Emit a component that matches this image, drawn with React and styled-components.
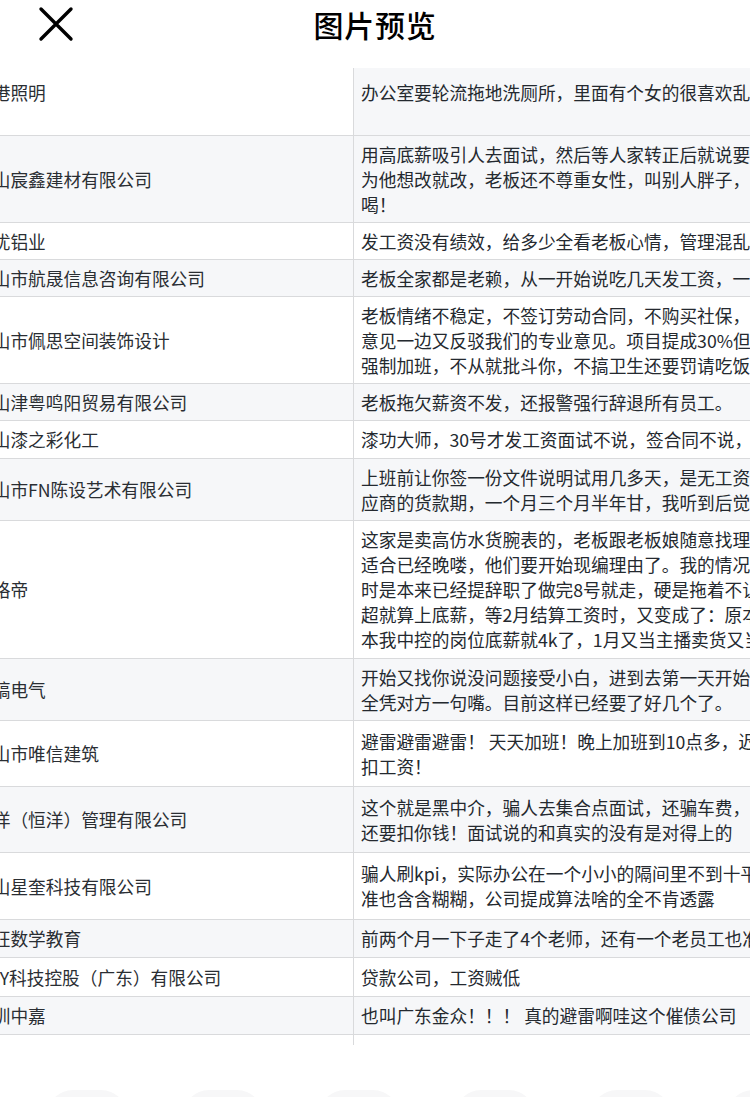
import React from "react";
import styled, { createGlobalStyle } from "styled-components";

const GlobalStyle = createGlobalStyle`
  html, body {
    margin: 0;
    padding: 0;
    background: #ffffff;
    overflow: hidden;
  }
  body {
    font-family: "Noto Sans CJK SC", "Noto Sans", "Liberation Sans", sans-serif;
    color: #24292f;
  }
  * { box-sizing: border-box; }
`;

const Page = styled.div`
  width: 750px;
  height: 1097px;
  display: flex;
  flex-direction: column;
  overflow: hidden;
  background: #ffffff;
`;

const Header = styled.header`
  flex-shrink: 0;
  height: 68px;
  display: grid;
  grid-template-columns: 1fr auto 1fr;
  align-items: start;
  padding-top: 6px;
  background: #ffffff;
`;

const CloseButton = styled.button`
  justify-self: start;
  margin-left: 38px;
  width: 36px;
  height: 36px;
  padding: 0;
  border: none;
  background: transparent;
  display: flex;
  align-items: center;
  justify-content: center;
  cursor: pointer;
`;

const Title = styled.h1`
  margin: 0;
  height: 36px;
  line-height: 36px;
  font-size: 30px;
  font-weight: 500;
  color: #000000;
  letter-spacing: 0.8px;
`;

const Frame = styled.div`
  flex-shrink: 0;
  height: 977px;
  overflow: hidden;
`;

const Table = styled.div`
  width: 1150px;
  margin-left: -33px;
  display: flex;
  flex-direction: column;
`;

const Row = styled.div`
  display: grid;
  grid-template-columns: 387px 1fr;
  height: ${(p) => p.$h}px;
  border-bottom: 1px solid #d9dadc;
`;

const NameCell = styled.div`
  display: flex;
  align-items: ${(p) => (p.$top ? "flex-start" : "center")};
  padding: ${(p) => (p.$top ? "12px 8px 0" : "0 8px")};
  border-right: 1px solid #d9dadc;
  background: ${(p) => (p.$shade ? "#f6f7f9" : "#ffffff")};
  font-size: 17.7px;
  line-height: 25px;
  white-space: nowrap;
  overflow: hidden;
  color: #2a2e33;
`;

const TextCell = styled.div`
  display: flex;
  flex-direction: column;
  justify-content: ${(p) => (p.$top ? "flex-start" : "center")};
  padding: ${(p) => (p.$top ? "12px 0 0 7px" : "0 0 0 7px")};
  background: ${(p) => (p.$shade ? "#f6f7f9" : "#ffffff")};
  overflow: hidden;
`;

const Line = styled.div`
  font-size: 17.7px;
  line-height: 25px;
  white-space: nowrap;
  color: #24292f;
`;

const Toolbar = styled.div`
  flex-shrink: 0;
  margin-top: 45px;
  display: flex;
  gap: 56px;
  padding-left: 47px;
`;

const ToolSlot = styled.div`
  flex-shrink: 0;
  width: 80px;
  height: 80px;
  border-radius: 26px;
  background: #f7f7f8;
`;

const rows = [
  {
    name: "华港照明",
    h: 68,
    top: true,
    nameShade: false,
    textShade: true,
    lines: ["办公室要轮流拖地洗厕所，里面有个女的很喜欢乱发脾气，动不动就骂人"],
  },
  {
    name: "佛山宸鑫建材有限公司",
    h: 87,
    shade: true,
    lines: [
      "用高底薪吸引人去面试，然后等人家转正后就说要改工资，说是公司规定",
      "为他想改就改，老板还不尊重女性，叫别人胖子，还经常骂人，真的劝退",
      "喝！",
    ],
  },
  {
    name: "兴优铝业",
    h: 37,
    lines: ["发工资没有绩效，给多少全看老板心情，管理混乱，天天开会骂人"],
  },
  {
    name: "佛山市航晟信息咨询有限公司",
    h: 37,
    shade: true,
    lines: ["老板全家都是老赖，从一开始说吃几天发工资，一直拖到现在都不发"],
  },
  {
    name: "佛山市佩思空间装饰设计",
    h: 87,
    lines: [
      "老板情绪不稳定，不签订劳动合同，不购买社保，一边让我们提供专业",
      "意见一边又反驳我们的专业意见。项目提成30%但是从来没有兑现过，",
      "强制加班，不从就批斗你，不搞卫生还要罚请吃饭，真的离谱",
    ],
  },
  {
    name: "佛山津粤鸣阳贸易有限公司",
    h: 37,
    shade: true,
    lines: ["老板拖欠薪资不发，还报警强行辞退所有员工。"],
  },
  {
    name: "佛山漆之彩化工",
    h: 38,
    lines: ["漆功大师，30号才发工资面试不说，签合同不说，入职才知道"],
  },
  {
    name: "佛山市FN陈设艺术有限公司",
    h: 62,
    shade: true,
    lines: [
      "上班前让你签一份文件说明试用几多天，是无工资的，还要你去催供",
      "应商的货款期，一个月三个月半年甘，我听到后觉得好离谱",
    ],
  },
  {
    name: "丹格帝",
    h: 138,
    lines: [
      "这家是卖高仿水货腕表的，老板跟老板娘随意找理由辞退员工，发现不",
      "适合已经晚喽，他们要开始现编理由了。我的情况是这样的，我离职",
      "时是本来已经提辞职了做完8号就走，硬是拖着不让走，说好的业绩",
      "超就算上底薪，等2月结算工资时，又变成了：原本的底薪没有了，",
      "本我中控的岗位底薪就4k了，1月又当主播卖货又当中控",
    ],
  },
  {
    name: "宏镐电气",
    h: 62,
    shade: true,
    lines: [
      "开始又找你说没问题接受小白，进到去第一天开始就说你不行，",
      "全凭对方一句嘴。目前这样已经要了好几个了。",
    ],
  },
  {
    name: "佛山市唯信建筑",
    h: 66,
    lines: ["避雷避雷避雷！ 天天加班！晚上加班到10点多，迟到一分钟", "扣工资！"],
  },
  {
    name: "恒洋（恒洋）管理有限公司",
    h: 66,
    shade: true,
    lines: [
      "这个就是黑中介，骗人去集合点面试，还骗车费，去到工厂",
      "还要扣你钱！面试说的和真实的没有是对得上的",
    ],
  },
  {
    name: "佛山星奎科技有限公司",
    h: 67,
    lines: [
      "骗人刷kpi，实际办公在一个小小的隔间里不到十平方，考核标",
      "准也含含糊糊，公司提成算法啥的全不肯透露",
    ],
  },
  {
    name: "疯狂数学教育",
    h: 38,
    shade: true,
    lines: ["前两个月一下子走了4个老师，还有一个老员工也准备走了"],
  },
  {
    name: "HDY科技控股（广东）有限公司",
    h: 39,
    lines: ["贷款公司，工资贼低"],
  },
  {
    name: "深圳中嘉",
    h: 38,
    shade: true,
    lines: ["也叫广东金众！！！ 真的避雷啊哇这个催债公司"],
  },
  {
    name: "",
    h: 40,
    lines: [""],
  },
];

function CloseIcon() {
  return (
    <svg width="36" height="36" viewBox="0 0 36 36" fill="none">
      <path
        d="M3 3 L33 33 M33 3 L3 33"
        stroke="#000000"
        strokeWidth="3.4"
        strokeLinecap="round"
      />
    </svg>
  );
}

export default function App() {
  return (
    <>
      <GlobalStyle />
      <Page>
        <Header>
          <CloseButton aria-label="关闭">
            <CloseIcon />
          </CloseButton>
          <Title>图片预览</Title>
          <span />
        </Header>
        <Frame>
          <Table>
            {rows.map((r, i) => {
              const nameShade = r.nameShade !== undefined ? r.nameShade : !!r.shade;
              const textShade = r.textShade !== undefined ? r.textShade : !!r.shade;
              return (
                <Row key={i} $h={r.h}>
                  <NameCell $top={r.top} $shade={nameShade}>
                    {r.name}
                  </NameCell>
                  <TextCell $top={r.top} $shade={textShade}>
                    {r.lines.map((l, j) => (
                      <Line key={j}>{l}</Line>
                    ))}
                  </TextCell>
                </Row>
              );
            })}
          </Table>
        </Frame>
        <Toolbar>
          {[0, 1, 2, 3, 4, 5].map((k) => (
            <ToolSlot key={k} />
          ))}
        </Toolbar>
      </Page>
    </>
  );
}
